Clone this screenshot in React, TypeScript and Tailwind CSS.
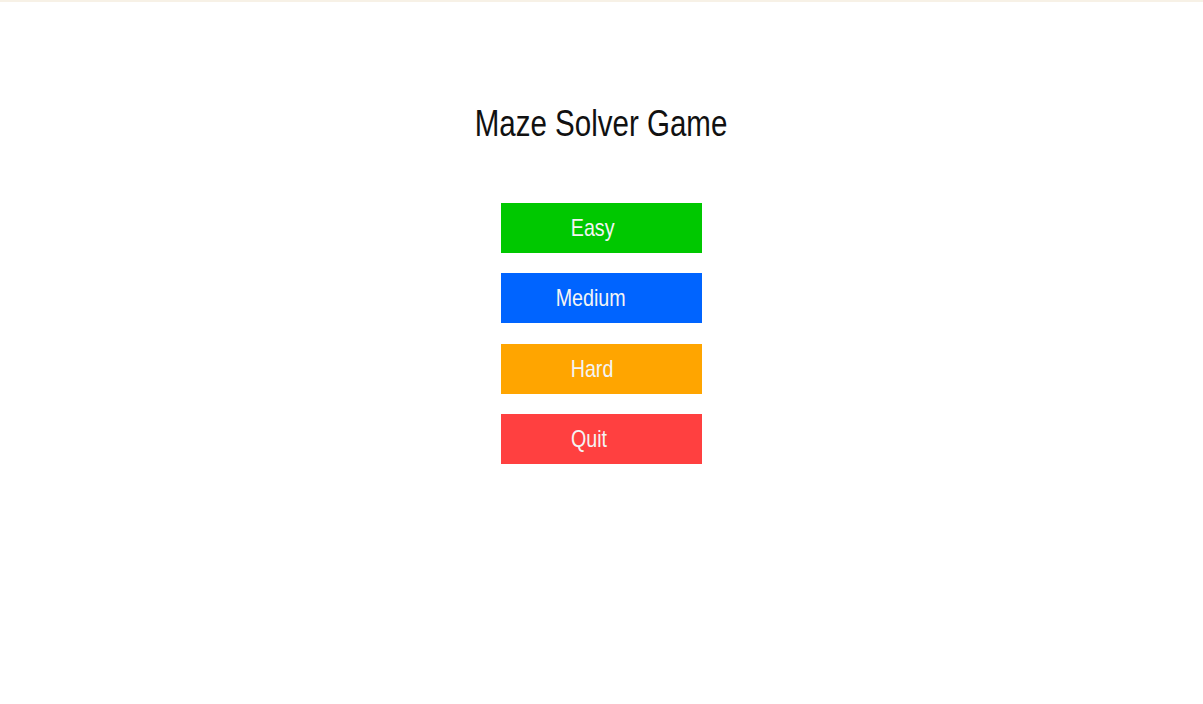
import React from "react";

const buttons = [
  { label: "Easy", bg: "bg-[#00c800]", pad: "pr-[17px]" },
  { label: "Medium", bg: "bg-[#0064ff]", pad: "pr-[21px]" },
  { label: "Hard", bg: "bg-[#ffa500]", pad: "pr-[18px]" },
  { label: "Quit", bg: "bg-[#ff4040]", pad: "pr-[24px]" },
];

export default function App() {
  return (
    <div
      className="w-[1203px] h-[704px] bg-white flex flex-col items-center overflow-hidden"
      style={{ fontFamily: '"Liberation Sans", Arial, sans-serif' }}
    >
      <div className="w-full h-[2px] bg-[#f7f1e6] shrink-0" />
      <h1 className="mt-[104px] text-[36px] leading-[36px] text-[#111111] font-normal scale-x-[0.82] whitespace-nowrap">
        Maze Solver Game
      </h1>
      <div className="mt-[61px] flex flex-col gap-[20.3px]">
        {buttons.map((b) => (
          <button
            key={b.label}
            className={`w-[201px] h-[50px] ${b.bg} ${b.pad} flex items-center justify-center text-[24px] leading-[24px] text-[#f4f4f4]`}
          >
            <span className="inline-block scale-x-[0.82]">{b.label}</span>
          </button>
        ))}
      </div>
    </div>
  );
}
